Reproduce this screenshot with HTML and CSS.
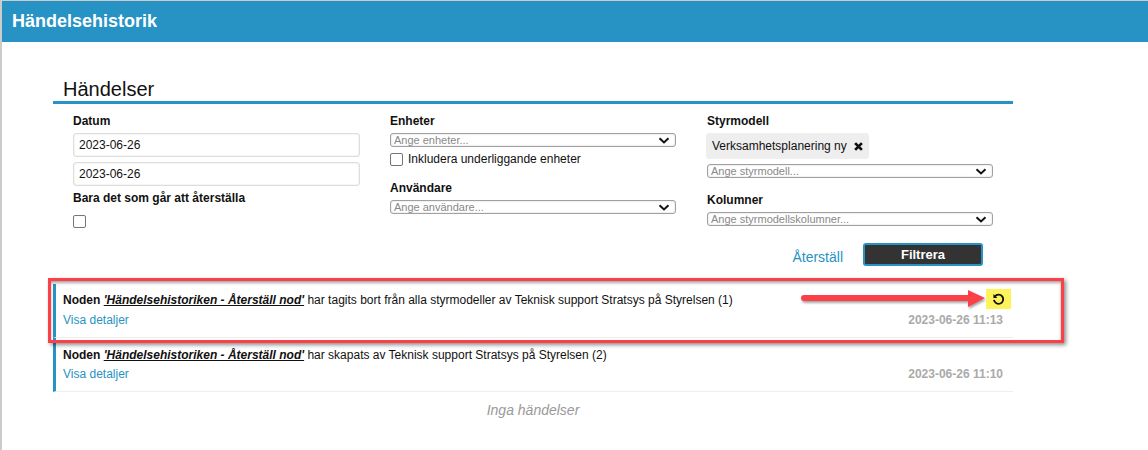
FILE: index.html
```html
<!DOCTYPE html>
<html lang="sv">
<head>
<meta charset="utf-8">
<title>Händelsehistorik</title>
<link rel="stylesheet" href="styles.css">
</head>
<body>
<div class="app">
  <header class="topbar">Händelsehistorik</header>
  <main class="panel">
    <h2 class="panel-title">Händelser</h2>
    <div class="filters">
      <div class="col">
        <label class="lbl">Datum</label>
        <div class="text-input">2023-06-26</div>
        <div class="text-input second">2023-06-26</div>
        <label class="lbl restore-lbl">Bara det som går att återställa</label>
        <span class="check restore-check"></span>
      </div>
      <div class="col">
        <label class="lbl">Enheter</label>
        <div class="select"><span>Ange enheter...</span><svg class="chev" viewBox="0 0 12 7"><path d="M1.5 1.2 6 5.4l4.5-4.2" fill="none" stroke="#111" stroke-width="2"/></svg></div>
        <div class="check-row"><span class="check"></span><span>Inkludera underliggande enheter</span></div>
        <label class="lbl user-lbl">Användare</label>
        <div class="select"><span>Ange användare...</span><svg class="chev" viewBox="0 0 12 7"><path d="M1.5 1.2 6 5.4l4.5-4.2" fill="none" stroke="#111" stroke-width="2"/></svg></div>
      </div>
      <div class="col">
        <label class="lbl">Styrmodell</label>
        <div class="chip"><span>Verksamhetsplanering ny</span><svg class="chip-x" viewBox="0 0 8 8"><path d="M1 1l6 6M7 1 1 7" stroke="#111" stroke-width="2.4"/></svg></div>
        <div class="select"><span>Ange styrmodell...</span><svg class="chev" viewBox="0 0 12 7"><path d="M1.5 1.2 6 5.4l4.5-4.2" fill="none" stroke="#111" stroke-width="2"/></svg></div>
        <label class="lbl col-lbl">Kolumner</label>
        <div class="select"><span>Ange styrmodellskolumner...</span><svg class="chev" viewBox="0 0 12 7"><path d="M1.5 1.2 6 5.4l4.5-4.2" fill="none" stroke="#111" stroke-width="2"/></svg></div>
      </div>
    </div>
    <div class="actions">
      <a class="reset">Återställ</a>
      <button class="filter-btn">Filtrera</button>
    </div>
    <ul class="events">
      <li class="event">
        <div class="event-line"><b>Noden</b> <a class="node">'Händelsehistoriken - Återställ nod'</a> har tagits bort från alla styrmodeller av Teknisk support Stratsys på Styrelsen (1)</div>
        <div class="event-foot"><a class="details">Visa detaljer</a><span class="time">2023-06-26 11:13</span></div>
      </li>
      <li class="event">
        <div class="event-line"><b>Noden</b> <a class="node">'Händelsehistoriken - Återställ nod'</a> har skapats av Teknisk support Stratsys på Styrelsen (2)</div>
        <div class="event-foot"><a class="details">Visa detaljer</a><span class="time">2023-06-26 11:10</span></div>
      </li>
    </ul>
    <p class="empty">Inga händelser</p>
  </main>
  <div class="callout"></div>
  <svg class="arrow" viewBox="0 0 186 18"><path d="M3 8h166" stroke="#fb4048" stroke-width="6" stroke-linecap="round"/><path d="M167 0l17 8-17 9z" fill="#fb4048"/></svg>
  <div class="restore-btn"><svg viewBox="0 0 12 12"><path d="M2.6 3.2A4.3 4.3 0 1 1 1.8 6.4" fill="none" stroke="#111" stroke-width="1.7"/><path d="M1.3 1v3.6h3.6z" fill="#111"/></svg></div>
</div>
</body>
</html>
```
FILE: styles.css
```css
* { box-sizing: border-box; }
html, body { margin: 0; height: 100%; }
body {
  background: #fff;
  color: #111;
  font-family: "Liberation Sans", Arial, sans-serif;
  font-size: 12px;
  overflow: hidden;
}
.app {
  position: relative;
  height: 450px;
  border-left: 2px solid #ccc;
  border-top: 1px solid #ccc;
}
.topbar {
  height: 41px;
  background: #2793c4;
  color: #fff;
  font-size: 18px;
  font-weight: 700;
  line-height: 41px;
  padding-left: 10px;
}
.panel { width: 960px; margin-left: 51px; }
.panel-title {
  margin: 35px 0 0;
  height: 24px;
  padding-left: 10px;
  font-size: 20px;
  font-weight: 400;
  line-height: 24px;
  border-bottom: 3px solid #2793c4;
  box-sizing: content-box;
}
.filters {
  display: grid;
  grid-template-columns: repeat(3, 287px);
  column-gap: 30px;
  padding: 10px 0 0 20px;
}
.col { display: flex; flex-direction: column; align-items: flex-start; }
.lbl { font-weight: 700; line-height: 14px; height: 14px; }
.text-input {
  width: 287px;
  height: 24px;
  margin-top: 5px;
  padding-left: 5px;
  border: 1px solid #ddd;
  border-radius: 3px;
  box-shadow: inset 0 0 2px #ddd;
  line-height: 22px;
}
.restore-lbl { margin-top: 5px; }
.check {
  display: block;
  flex: none;
  width: 13px;
  height: 13px;
  border: 1px solid #767676;
  border-radius: 2px;
  background: #fff;
}
.restore-check { margin-top: 10px; }
.select {
  display: flex;
  align-items: center;
  justify-content: space-between;
  width: 286px;
  height: 14px;
  margin-top: 5px;
  padding: 0 5px 0 3px;
  border: 1px solid #a0a0a0;
  border-radius: 3px;
  color: #888;
  font-size: 11px;
  line-height: 12px;
  box-shadow: inset 0 0 2px #ccc;
}
.chev { width: 12px; height: 7px; }
.check-row { display: flex; align-items: center; gap: 5px; height: 14px; margin-top: 5px; }
.user-lbl { margin-top: 15px; }
.col-lbl { margin-top: 15px; }
.chip {
  display: flex;
  align-items: center;
  justify-content: space-between;
  width: 163px;
  height: 26px;
  margin: 5px 0 0 -1px;
  padding: 0 6px;
  background: #eee;
  border-radius: 3px;
}
.chip + .select { margin-top: 5px; }
.chip-x { width: 9px; height: 9px; }
.actions {
  display: flex;
  justify-content: flex-end;
  align-items: center;
  gap: 20px;
  height: 23px;
  margin-top: 15px;
  padding-right: 30px;
}
.reset { color: #2793c4; font-size: 14px; margin-top: 5px; }
.filter-btn {
  width: 120px;
  height: 23px;
  padding: 0;
  background: #333;
  border: 2px solid #2793c4;
  border-radius: 3px;
  color: #fff;
  font: 700 13px "Liberation Sans", Arial, sans-serif;
  line-height: 17px;
}
.events { list-style: none; margin: 18px 0 0; padding: 0; }
.event {
  height: 54px;
  padding: 9px 10px 0 7px;
  border-left: 3px solid #2793c4;
  border-bottom: 1px solid #eee;
}
.event + .event { padding-top: 10px; }
.event-line { line-height: 14px; }
.node { font-weight: 700; font-style: italic; text-decoration: underline; }
.event-foot { display: flex; justify-content: space-between; margin-top: 6px; line-height: 14px; }
.event + .event .event-foot { margin-top: 5px; }
.details { color: #2793c4; }
.time { color: #aaa; font-weight: 700; }
.empty { margin: 10px 0 0; text-align: center; color: #999; font-size: 14px; font-style: italic; line-height: 16px; }
.callout {
  position: absolute;
  left: 46px;
  top: 277px;
  width: 1016px;
  height: 65px;
  border: 3px solid #fb4048;
  box-shadow: 2px 2px 4px rgba(0,0,0,.45), inset 0 2px 3px rgba(0,0,0,.35);
}
.arrow {
  position: absolute;
  left: 799px;
  top: 289px;
  width: 186px;
  height: 18px;
  filter: drop-shadow(1px 2px 1px rgba(0,0,0,.35));
}
.restore-btn {
  position: absolute;
  left: 984px;
  top: 288px;
  width: 25px;
  height: 20px;
  background: #fdf35a;
  display: flex;
  align-items: center;
  justify-content: center;
}
.restore-btn svg { width: 13px; height: 13px; }
```
